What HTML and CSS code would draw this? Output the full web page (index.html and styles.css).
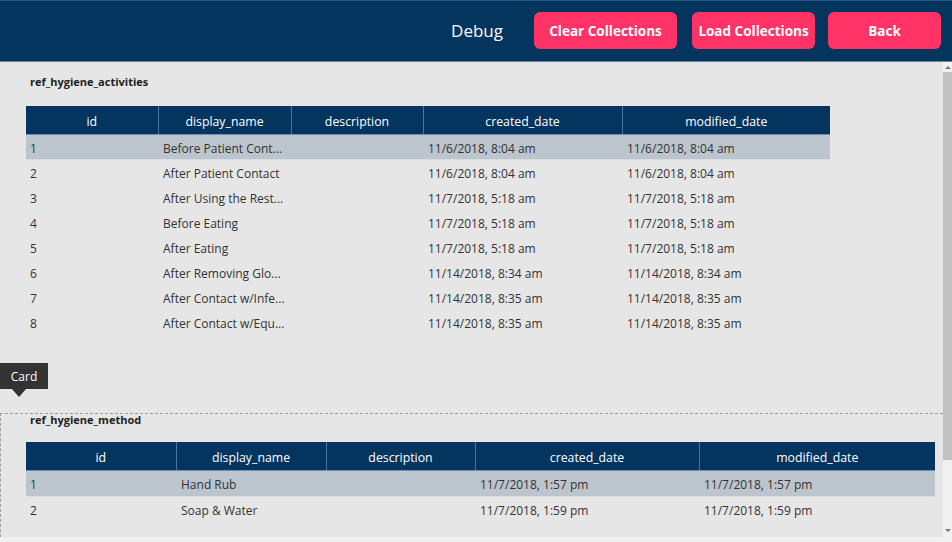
FILE: index.html
```html
<!DOCTYPE html>
<html>
<head>
<meta charset="utf-8">
<link rel="stylesheet" href="styles.css">
</head>
<body>
<header class="topbar">
  <span class="title">Debug</span>
  <button class="btn btn-clear">Clear Collections</button>
  <button class="btn btn-load">Load Collections</button>
  <button class="btn btn-back">Back</button>
</header>
<div class="main">
  <div class="content">
    <section class="card card-first">
      <div class="card-title">ref_hygiene_activities</div>
      <table class="grid grid-a">
        <colgroup><col class="c1"><col class="c2"><col class="c3"><col class="c4"><col class="c5"></colgroup>
        <thead><tr><th>id</th><th>display_name</th><th>description</th><th>created_date</th><th>modified_date</th></tr></thead>
        <tbody>
          <tr class="sel"><td>1</td><td>Before Patient Cont...</td><td></td><td>11/6/2018, 8:04 am</td><td>11/6/2018, 8:04 am</td></tr>
          <tr><td>2</td><td>After Patient Contact</td><td></td><td>11/6/2018, 8:04 am</td><td>11/6/2018, 8:04 am</td></tr>
          <tr><td>3</td><td>After Using the Rest...</td><td></td><td>11/7/2018, 5:18 am</td><td>11/7/2018, 5:18 am</td></tr>
          <tr><td>4</td><td>Before Eating</td><td></td><td>11/7/2018, 5:18 am</td><td>11/7/2018, 5:18 am</td></tr>
          <tr><td>5</td><td>After Eating</td><td></td><td>11/7/2018, 5:18 am</td><td>11/7/2018, 5:18 am</td></tr>
          <tr><td>6</td><td>After Removing Glo...</td><td></td><td>11/14/2018, 8:34 am</td><td>11/14/2018, 8:34 am</td></tr>
          <tr><td>7</td><td>After Contact w/Infe...</td><td></td><td>11/14/2018, 8:35 am</td><td>11/14/2018, 8:35 am</td></tr>
          <tr><td>8</td><td>After Contact w/Equ...</td><td></td><td>11/14/2018, 8:35 am</td><td>11/14/2018, 8:35 am</td></tr>
        </tbody>
      </table>
    </section>
    <section class="card card-second">
      <div class="tooltip">Card</div>
      <div class="card-title">ref_hygiene_method</div>
      <table class="grid grid-b">
        <colgroup><col class="c1"><col class="c2"><col class="c3"><col class="c4"><col class="c5"></colgroup>
        <thead><tr><th>id</th><th>display_name</th><th>description</th><th>created_date</th><th>modified_date</th></tr></thead>
        <tbody>
          <tr class="sel"><td>1</td><td>Hand Rub</td><td></td><td>11/7/2018, 1:57 pm</td><td>11/7/2018, 1:57 pm</td></tr>
          <tr><td>2</td><td>Soap &amp; Water</td><td></td><td>11/7/2018, 1:59 pm</td><td>11/7/2018, 1:59 pm</td></tr>
        </tbody>
      </table>
    </section>
  </div>
  <div class="vscroll">
    <div class="arrow-up"></div>
    <div class="thumb"></div>
    <div class="track"></div>
    <div class="arrow-down"></div>
  </div>
</div>
<div class="hbar"></div>
</body>
</html>
```
FILE: styles.css
```css
* { box-sizing: border-box; }
html, body { margin: 0; padding: 0; }
body {
  width: 952px;
  height: 542px;
  overflow: hidden;
  background: #e6e6e6;
  font-family: "Open Sans", "Noto Sans", sans-serif;
  color: #333;
}
.topbar {
  height: 62px;
  background: #03355f;
  border-top: 1px solid #2c5880;
  border-bottom: 1px solid #6d8398;
  display: flex;
  align-items: center;
  justify-content: flex-end;
  padding-right: 11px;
}
.title {
  color: #fff;
  font-size: 17px;
  margin-right: 31px;
  padding-bottom: 1px;
}
.btn {
  height: 37px;
  border: none;
  border-radius: 6px;
  background: #ff3366;
  color: #fff;
  font-family: "Open Sans", sans-serif;
  font-weight: 700;
  font-size: 13.5px;
  padding: 1px 0 0;
  margin-top: -1px;
}
.btn-clear { width: 143px; margin-right: 15px; }
.btn-load { width: 123px; margin-right: 13px; }
.btn-back { width: 113px; }
.main {
  display: flex;
  height: 475px;
}
.content {
  width: 943px;
  overflow: hidden;
}
.card { position: relative; }
.card-first {
  padding: 12px 0 0 26px;
  height: 351px;
}
.card-title {
  font-size: 11px;
  font-weight: 700;
  line-height: 16px;
  margin-left: 4px;
  color: #222;
}
.card-first .card-title { margin-bottom: 16px; }
.card-second {
  border-top: 1px dashed #a0a0a0;
  border-left: 1px dashed #a0a0a0;
  padding: 0 0 0 25px;
  height: 200px;
}
.card-second .card-title { margin-bottom: 16px; line-height: 13px; margin-top: -1px; }
.tooltip {
  position: absolute;
  left: -1px;
  top: -51px;
  width: 48px;
  height: 26px;
  background: #333;
  color: #fff;
  font-size: 12px;
  line-height: 27px;
  text-align: center;
}
.tooltip::after {
  content: "";
  position: absolute;
  left: 12px;
  top: 26px;
  border-left: 7px solid transparent;
  border-right: 7px solid transparent;
  border-top: 8px solid #333;
}
.grid {
  border-collapse: collapse;
  table-layout: fixed;
  font-size: 12px;
}
.grid th {
  background: #03355f;
  color: #fff;
  font-weight: 400;
  font-size: 12.3px;
  height: 28px;
  padding: 3px 0 0;
  text-align: center;
  border-left: 1px solid #4775a2;
  border-bottom: 1px solid #6d93b8;
}
.grid th:first-child { border-left: none; }
.grid td {
  height: 25px;
  padding: 4px 0 0 5px;
  white-space: nowrap;
  overflow: hidden;
  color: #333;
}
.grid td:first-child { padding-left: 4px; }
.grid tr.sel td {
  background: #bcc5cd;
  border-bottom: 1px solid #d8dde2;
}
.grid-a { width: 804px; }
.grid-a .c1 { width: 132px; }
.grid-a .c2 { width: 133px; }
.grid-a .c3 { width: 132px; }
.grid-a .c4 { width: 199px; }
.grid-a .c5 { width: 208px; }
.grid-b { width: 909px; }
.grid-b .c1 { width: 150px; }
.grid-b .c2 { width: 150px; }
.grid-b .c3 { width: 149px; }
.grid-b .c4 { width: 224px; }
.grid-b .c5 { width: 236px; }
.grid-b tr.sel td { height: 26px; padding-top: 3px; }
.vscroll {
  width: 9px;
  background: #f0f0f0;
  display: flex;
  flex-direction: column;
  align-items: center;
}
.arrow-up {
  width: 0; height: 0;
  margin-top: 4px;
  border-left: 3px solid transparent;
  border-right: 3px solid transparent;
  border-bottom: 3px solid #777;
}
.thumb {
  width: 9px;
  height: 388px;
  margin-top: 3px;
  background: #c1c1c1;
}
.track { flex: 1; }
.arrow-down {
  width: 0; height: 0;
  margin-bottom: 5px;
  border-left: 3px solid transparent;
  border-right: 3px solid transparent;
  border-top: 3px solid #777;
}
.hbar {
  height: 5px;
  background: #f0f0f0;
}
```
